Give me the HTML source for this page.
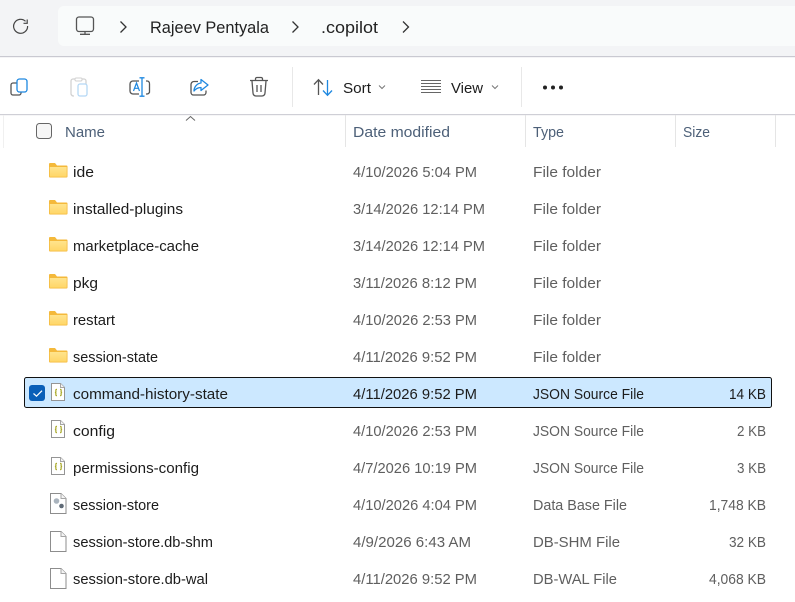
<!DOCTYPE html>
<html><head><meta charset="utf-8"><style>
html,body{margin:0;padding:0;width:795px;height:602px;overflow:hidden;background:#fff}
svg{display:block;font-family:"Liberation Sans",sans-serif;font-size:14.6px}
.n{fill:#1c1c1c}.g{fill:#5f5f5f}.h{fill:#4d6078}.b{fill:#222;font-size:17px}
</style></head><body>
<svg width="795" height="602" viewBox="0 0 795 602" xmlns="http://www.w3.org/2000/svg">
<rect width="795" height="56" fill="#f3f4f6"/>
<rect y="56" width="795" height="1.2" fill="#c9c9d1"/>
<rect x="58" y="6" width="760" height="40" rx="6" fill="#f9fbfb"/>
<rect y="114" width="795" height="1.2" fill="#cfcfd6"/>
<!-- refresh -->
<path d="M25.500 21.300A7 7 0 1 0 27.600 26" fill="none" stroke="#444" stroke-width="1.2"/><path d="M23.500 23.300h3.700v-3.800" fill="none" stroke="#444" stroke-width="1.2"/>
<!-- monitor -->
<rect x="76.500" y="17" width="17" height="14.500" rx="2.500" fill="none" stroke="#555" stroke-width="1.3"/><path d="M85 31.500v2.500M80 34.300h10" stroke="#555" stroke-width="1.3" fill="none"/>
<path d="M120.500 21.500l5.500 5.500-5.500 5.500M292.500 21.500l5.500 5.500-5.500 5.500M403 21.500l5.500 5.500-5.500 5.500" fill="none" stroke="#333" stroke-width="1.3"/>
<text class="b" x="150" y="33" textLength="119" lengthAdjust="spacingAndGlyphs">Rajeev Pentyala</text>
<text class="b" x="321" y="33" textLength="57" lengthAdjust="spacingAndGlyphs">.copilot</text>
<!-- copy -->
<path d="M17 83h-4a2 2 0 0 0-2 2v8a2 2 0 0 0 2 2h6a2 2 0 0 0 2-2v-1" fill="none" stroke="#555" stroke-width="1.3"/>
<rect x="17" y="79" width="10" height="13" rx="2.500" fill="#fff" stroke="#1e88e0" stroke-width="1.3"/>
<!-- paste -->
<path d="M74 96h-1a3 3 0 0 1-2-2V81a2 2 0 0 1 2-2h11a2 2 0 0 1 2 2v3" fill="none" stroke="#d2d2d2" stroke-width="1.3"/><rect x="75" y="78" width="7" height="3" rx="1.200" fill="#fff" stroke="#d2d2d2"/>
<rect x="78" y="84" width="9" height="12" rx="2" fill="#fff" stroke="#b5d8f5" stroke-width="1.300"/>
<!-- rename -->
<path d="M139 81h-6a3 3 0 0 0-3 3v7a3 3 0 0 0 3 3h6M146 81h1a2.500 2.500 0 0 1 2.500 3v7a2.500 2.500 0 0 1-2.500 3h-1" fill="none" stroke="#555" stroke-width="1.300"/>
<path d="M142 78v18M139.500 77.800h5M139.500 96.200h5" fill="none" stroke="#1e88e0" stroke-width="1.300"/>
<path d="M133.500 91l3-8 3 8M134.600 88.300h3.800" fill="none" stroke="#1e88e0" stroke-width="1.200"/>
<!-- share -->
<path d="M198 81.500h-4a3 3 0 0 0-3 3v8a2.500 2.500 0 0 0 2.500 2.500h10a2.500 2.500 0 0 0 2.500-2.500v-2" fill="none" stroke="#555" stroke-width="1.300"/>
<path d="M201 79.500l7 5.500-7 5.500v-3c-3 0-5 1-7 3.500 0-4 3-7.500 7-8z" fill="#fff" stroke="#1e88e0" stroke-width="1.300" stroke-linejoin="round"/>
<!-- delete -->
<path d="M250 80.500h18M255.500 80v-1.200a1.500 1.500 0 0 1 1.500-1.300h4a1.500 1.500 0 0 1 1.500 1.300V80M252 81l1 12a3 3 0 0 0 3 3h6a3 3 0 0 0 3-3l1-12M257 85v7M261 85v7" fill="none" stroke="#555" stroke-width="1.300"/>
<rect x="292" y="67" width="1" height="40" fill="#e8e8e8"/><rect x="521" y="67" width="1" height="40" fill="#e8e8e8"/>
<!-- sort -->
<path d="M318.500 95V80M314 84.500l4.500-4.800 4.500 4.800" fill="none" stroke="#555" stroke-width="1.300"/>
<path d="M327.500 80v15M323 90.500l4.500 4.800 4.500-4.800" fill="none" stroke="#1e88e0" stroke-width="1.300"/>
<text class="n" x="343" y="93" textLength="28" lengthAdjust="spacingAndGlyphs">Sort</text>
<path d="M379 85.500l3 3 3-3M492 85.500l3 3 3-3" fill="none" stroke="#777" stroke-width="1"/>
<path d="M421 80.500h20M421 83.500h20M421 86.500h20M421 89.500h20M421 92.500h20" fill="none" stroke="#666" stroke-width="1"/>
<text class="n" x="451" y="93" textLength="32" lengthAdjust="spacingAndGlyphs">View</text>
<circle cx="545" cy="87.500" r="2" fill="#222"/><circle cx="553" cy="87.500" r="2" fill="#222"/><circle cx="561" cy="87.500" r="2" fill="#222"/>
<!-- header -->
<rect x="3" y="115" width="1" height="33" fill="#f0f0f0"/>
<path d="M186 120.500l4.500-4 4.500 4" fill="none" stroke="#666" stroke-width="1"/>
<rect x="36.500" y="123.500" width="15" height="15" rx="3" fill="#f6f6f6" stroke="#666" stroke-width="1"/>
<text class="h" x="65" y="137" textLength="40" lengthAdjust="spacingAndGlyphs">Name</text>
<rect x="345" y="115" width="1" height="32" fill="#e5e5e5"/><rect x="525" y="115" width="1" height="32" fill="#e5e5e5"/><rect x="675" y="115" width="1" height="32" fill="#e5e5e5"/><rect x="775" y="115" width="1" height="32" fill="#e5e5e5"/>
<text class="h" x="353" y="137" textLength="97" lengthAdjust="spacingAndGlyphs">Date modified</text>
<text class="h" x="533" y="137" textLength="31" lengthAdjust="spacingAndGlyphs">Type</text>
<text class="h" x="683" y="137" textLength="27" lengthAdjust="spacingAndGlyphs">Size</text>
<defs>
<linearGradient id="fg" x1="0" y1="0" x2="0" y2="1"><stop offset="0" stop-color="#ffe48d"/><stop offset="1" stop-color="#ffd668"/></linearGradient>
<g id="f"><path d="M49 164a1 1 0 0 1 1-1h5l2 2.500h9.500a1 1 0 0 1 1 1V176.500a1 1 0 0 1-1 1H50a1 1 0 0 1-1-1z" fill="#f4b93b"/><rect x="49.800" y="167" width="16.900" height="9.700" fill="url(#fg)"/></g>
<g id="d"><path d="M50.500 .5h10.500l5 5v15h-15.500z" fill="#fff" stroke="#8d8d8d" stroke-width="1"/><path d="M61 .5v5h5" fill="#f4f4f4" stroke="#a5a5a5" stroke-width="1"/></g>
<g id="j"><path d="M51.500 .5h9l4 4v13h-13z" fill="#fff" stroke="#959595" stroke-width="1"/><path d="M60.500 .5v4h4" fill="#f4f4f4" stroke="#a5a5a5" stroke-width="1"/><path d="M57 6.300c-1.500 0-1.100 .9-1.100 2.200 0 1-1 1-1 1s1 0 1 1c0 1.300-.4 2.200 1.100 2.200M60 6.300c1.500 0 1.100 .9 1.100 2.200 0 1 1 1 1 1s-1 0-1 1c0 1.300 .4 2.200-1.100 2.200" fill="none" stroke="#a9a92a" stroke-width="1.200"/></g>
</defs>
<use href="#f"/><use href="#f" y="37"/><use href="#f" y="74"/><use href="#f" y="111"/><use href="#f" y="148"/><use href="#f" y="185"/>
<!-- selected -->
<rect x="24.500" y="377.500" width="747" height="30" rx="2" fill="#cce8ff" stroke="#111" stroke-width="1"/>
<rect x="29" y="385" width="16" height="16" rx="3" fill="#0a5fb8"/><path d="M33.500 393.500l3 2.700 5.500-5.500" fill="none" stroke="#fff" stroke-width="1.200"/>
<use href="#j" y="383"/><use href="#j" y="420"/><use href="#j" y="457"/>
<use href="#d" y="493"/><use href="#d" y="531"/><use href="#d" y="568"/>
<circle cx="56.500" cy="501" r="2.800" fill="#a9b3bd"/><circle cx="61.500" cy="506" r="2.300" fill="#5f6a76"/>
<g class="n" transform="translate(0,1)">
<text x="73" y="176" textLength="21" lengthAdjust="spacingAndGlyphs">ide</text>
<text x="73" y="213" textLength="110" lengthAdjust="spacingAndGlyphs">installed-plugins</text>
<text x="73" y="250" textLength="126" lengthAdjust="spacingAndGlyphs">marketplace-cache</text>
<text x="73" y="287" textLength="25" lengthAdjust="spacingAndGlyphs">pkg</text>
<text x="73" y="324" textLength="42" lengthAdjust="spacingAndGlyphs">restart</text>
<text x="73" y="361" textLength="85" lengthAdjust="spacingAndGlyphs">session-state</text>
<text x="73" y="398" textLength="155" lengthAdjust="spacingAndGlyphs">command-history-state</text>
<text x="73" y="435" textLength="42" lengthAdjust="spacingAndGlyphs">config</text>
<text x="73" y="472" textLength="126" lengthAdjust="spacingAndGlyphs">permissions-config</text>
<text x="73" y="509" textLength="86" lengthAdjust="spacingAndGlyphs">session-store</text>
<text x="73" y="546" textLength="140" lengthAdjust="spacingAndGlyphs">session-store.db-shm</text>
<text x="73" y="583" textLength="135" lengthAdjust="spacingAndGlyphs">session-store.db-wal</text>
</g>
<g class="g" transform="translate(0,1)">
<text x="353" y="176" textLength="124" lengthAdjust="spacingAndGlyphs">4/10/2026 5:04 PM</text>
<text x="353" y="213" textLength="132" lengthAdjust="spacingAndGlyphs">3/14/2026 12:14 PM</text>
<text x="353" y="250" textLength="132" lengthAdjust="spacingAndGlyphs">3/14/2026 12:14 PM</text>
<text x="353" y="287" textLength="124" lengthAdjust="spacingAndGlyphs">3/11/2026 8:12 PM</text>
<text x="353" y="324" textLength="124" lengthAdjust="spacingAndGlyphs">4/10/2026 2:53 PM</text>
<text x="353" y="361" textLength="124" lengthAdjust="spacingAndGlyphs">4/11/2026 9:52 PM</text>
<text x="353" y="398" textLength="124" lengthAdjust="spacingAndGlyphs" style="fill:#1c1c1c">4/11/2026 9:52 PM</text>
<text x="353" y="435" textLength="124" lengthAdjust="spacingAndGlyphs">4/10/2026 2:53 PM</text>
<text x="353" y="472" textLength="124" lengthAdjust="spacingAndGlyphs">4/7/2026 10:19 PM</text>
<text x="353" y="509" textLength="124" lengthAdjust="spacingAndGlyphs">4/10/2026 4:04 PM</text>
<text x="353" y="546" textLength="118" lengthAdjust="spacingAndGlyphs">4/9/2026 6:43 AM</text>
<text x="353" y="583" textLength="124" lengthAdjust="spacingAndGlyphs">4/11/2026 9:52 PM</text>
<text x="533" y="176" textLength="68" lengthAdjust="spacingAndGlyphs">File folder</text>
<text x="533" y="213" textLength="68" lengthAdjust="spacingAndGlyphs">File folder</text>
<text x="533" y="250" textLength="68" lengthAdjust="spacingAndGlyphs">File folder</text>
<text x="533" y="287" textLength="68" lengthAdjust="spacingAndGlyphs">File folder</text>
<text x="533" y="324" textLength="68" lengthAdjust="spacingAndGlyphs">File folder</text>
<text x="533" y="361" textLength="68" lengthAdjust="spacingAndGlyphs">File folder</text>
<text x="533" y="398" textLength="111" lengthAdjust="spacingAndGlyphs" style="fill:#1c1c1c">JSON Source File</text>
<text x="533" y="435" textLength="111" lengthAdjust="spacingAndGlyphs">JSON Source File</text>
<text x="533" y="472" textLength="111" lengthAdjust="spacingAndGlyphs">JSON Source File</text>
<text x="533" y="509" textLength="94" lengthAdjust="spacingAndGlyphs">Data Base File</text>
<text x="533" y="546" textLength="87" lengthAdjust="spacingAndGlyphs">DB-SHM File</text>
<text x="533" y="583" textLength="84" lengthAdjust="spacingAndGlyphs">DB-WAL File</text>
<text x="729" y="398" textLength="37" lengthAdjust="spacingAndGlyphs" style="fill:#1c1c1c">14 KB</text>
<text x="737" y="435" textLength="29" lengthAdjust="spacingAndGlyphs">2 KB</text>
<text x="737" y="472" textLength="29" lengthAdjust="spacingAndGlyphs">3 KB</text>
<text x="709" y="509" textLength="57" lengthAdjust="spacingAndGlyphs">1,748 KB</text>
<text x="729" y="546" textLength="37" lengthAdjust="spacingAndGlyphs">32 KB</text>
<text x="709" y="583" textLength="57" lengthAdjust="spacingAndGlyphs">4,068 KB</text>
</g>
</svg>
</body></html>
